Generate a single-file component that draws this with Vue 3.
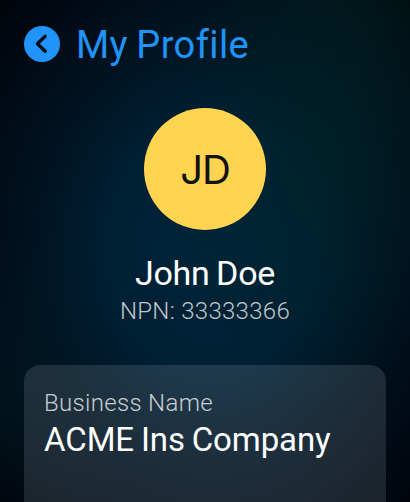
<script setup>
import { ref } from "vue";

const title = ref("My Profile");
const user = ref({
  initials: "JD",
  name: "John Doe",
  npn: "33333366",
});
const details = ref([{ label: "Business Name", value: "ACME Ins Company" }]);
</script>

<template>
  <div class="screen">
    <header class="header">
      <button class="back" aria-label="Back">
        <svg viewBox="0 0 36 36" width="36" height="36">
          <circle cx="18" cy="18" r="18" fill="#2094fa" />
          <path
            d="M21.2 10.3 L13.4 17.8 L21.2 25.3"
            fill="none"
            stroke="#020b14"
            stroke-width="3.3"
            stroke-linecap="round"
            stroke-linejoin="round"
          />
        </svg>
      </button>
      <h1 class="title">{{ title }}</h1>
    </header>

    <section class="profile">
      <div class="avatar">{{ user.initials }}</div>
      <h2 class="name">{{ user.name }}</h2>
      <p class="npn">NPN: {{ user.npn }}</p>
    </section>

    <section class="card">
      <div v-for="item in details" :key="item.label">
        <p class="label">{{ item.label }}</p>
        <p class="value">{{ item.value }}</p>
      </div>
    </section>
  </div>
</template>

<style>
body {
  margin: 0;
  background: #01040b;
}
</style>

<style scoped>
.screen {
  display: flex;
  flex-direction: column;
  box-sizing: border-box;
  width: 410px;
  height: 502px;
  padding: 26px 24px 0;
  overflow: hidden;
  font-family: Roboto, "Liberation Sans", sans-serif;
  background:
    radial-gradient(ellipse 150px 240px at 325px 150px, rgba(0, 38, 40, 0.55), rgba(0, 38, 40, 0) 100%),
    radial-gradient(ellipse 285px 350px at 210px 250px, #002438 0%, #002034 35%, rgba(0, 26, 44, 0.7) 60%, rgba(0, 14, 26, 0) 100%),
    radial-gradient(ellipse 130px 150px at 20px 390px, rgba(0, 26, 30, 0.6), rgba(0, 26, 30, 0) 100%),
    radial-gradient(ellipse 260px 200px at 350px 0px, rgba(0, 22, 18, 0.75), rgba(0, 22, 18, 0) 100%),
    #01040b;
}

h1,
h2,
p {
  margin: 0;
  font-weight: 400;
  white-space: nowrap;
}

.header {
  display: flex;
  align-items: center;
  gap: 16px;
  height: 36px;
}

.back {
  width: 36px;
  height: 36px;
  padding: 0;
  border: none;
  background: none;
  cursor: pointer;
}

.back svg {
  display: block;
}

.title {
  padding-top: 2px;
  color: #2094fa;
  font-size: 38px;
  line-height: 36px;
  letter-spacing: 0.4px;
  word-spacing: -1.5px;
}

.profile {
  display: flex;
  flex-direction: column;
  align-items: center;
  margin-top: 46px;
}

.avatar {
  width: 122px;
  height: 122px;
  border-radius: 50%;
  background: #ffd451;
  color: #111;
  font-family: Inter, "Open Sans", sans-serif;
  font-size: 40px;
  letter-spacing: -1px;
  line-height: 123px;
  text-align: center;
}

.name {
  margin-top: 23px;
  color: #fff;
  font-size: 34px;
  line-height: 40px;
  letter-spacing: -0.3px;
  word-spacing: -1.5px;
}

.npn {
  margin-top: 3px;
  color: #c0c7cb;
  font-size: 24px;
  font-weight: 300;
  line-height: 30px;
  letter-spacing: 0.3px;
}

.card {
  flex: 1;
  margin-top: 39px;
  padding: 23px 20px 0;
  border-radius: 16px 16px 0 0;
  background: rgba(242, 244, 251, 0.12);
}

.label {
  color: #c8cdd0;
  font-size: 24px;
  font-weight: 300;
  line-height: 30px;
  letter-spacing: 0.32px;
}

.value {
  margin-top: 2px;
  color: #fff;
  font-size: 33px;
  line-height: 40px;
  letter-spacing: -0.1px;
  word-spacing: -1.2px;
}
</style>
